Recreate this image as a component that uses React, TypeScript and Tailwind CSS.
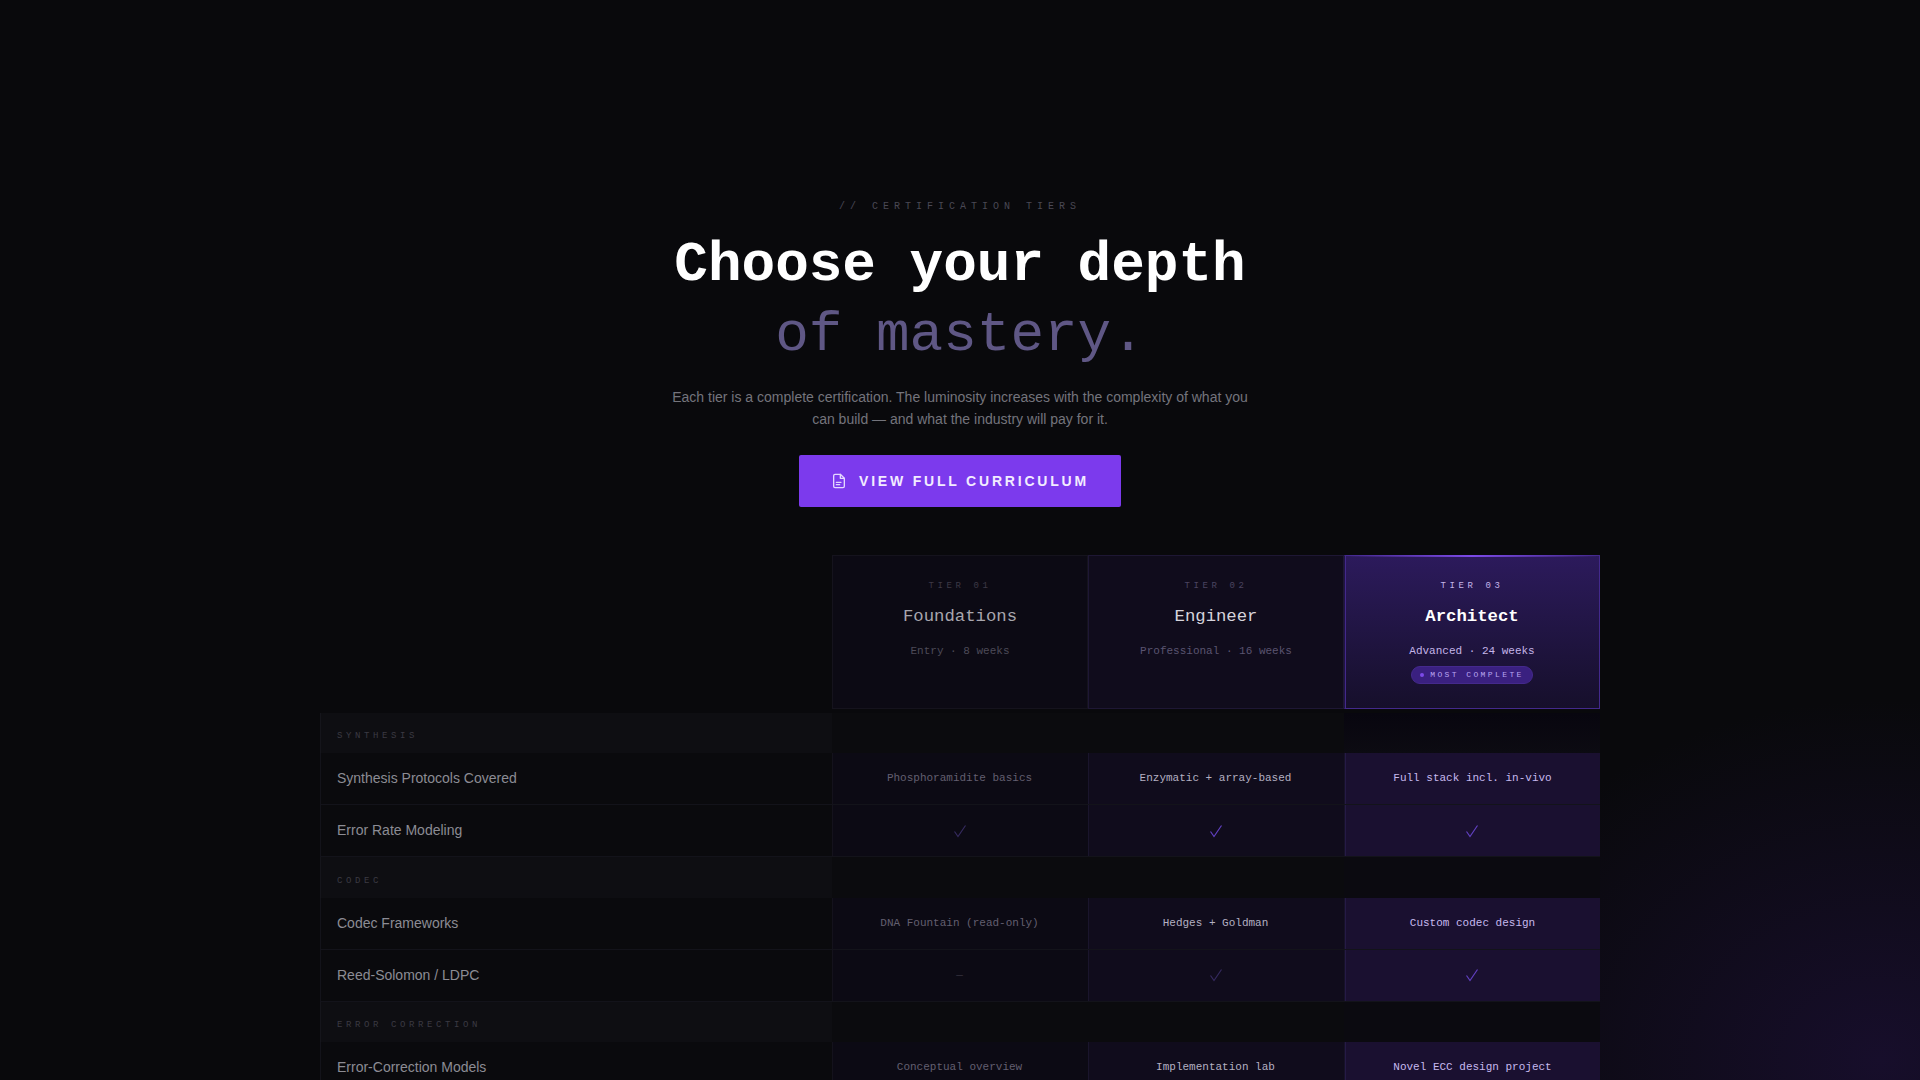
type Cell = { text?: string; mark?: 'on' | 'dim' | 'none' }
type Row = { label: string; cells: [Cell, Cell, Cell] }
type Section = { title: string; rows: Row[] }

const mono = "font-['Liberation_Mono',monospace]"
const sans = "font-['Liberation_Sans',Arial,sans-serif]"

const tiers = [
  {
    tier: 'TIER 01',
    name: 'Foundations',
    sub: 'Entry · 8 weeks',
    box: 'border-[#15131d] bg-[#0c0a14]',
    tierColor: 'text-[#3d3946]',
    nameColor: 'text-[#a8a6ae] font-normal',
    subColor: 'text-[#4d4a58]',
  },
  {
    tier: 'TIER 02',
    name: 'Engineer',
    sub: 'Professional · 16 weeks',
    box: 'border-[#1e1734] bg-[#100c1c]',
    tierColor: 'text-[#4b4460]',
    nameColor: 'text-[#d6d4dc] font-normal',
    subColor: 'text-[#5a5470]',
  },
  {
    tier: 'TIER 03',
    name: 'Architect',
    sub: 'Advanced · 24 weeks',
    box: 'border-[#43298c] border-l-[#201542] shadow-[inset_1px_0_0_#43298c] bg-gradient-to-b from-[#2c1a5c] to-[#160f2b]',
    tierColor: 'text-[#c4b5e8]',
    nameColor: 'text-white font-bold',
    subColor: 'text-[#c4b5e8]',
  },
]

const sections: Section[] = [
  {
    title: 'SYNTHESIS',
    rows: [
      {
        label: 'Synthesis Protocols Covered',
        cells: [{ text: 'Phosphoramidite basics' }, { text: 'Enzymatic + array-based' }, { text: 'Full stack incl. in-vivo' }],
      },
      {
        label: 'Error Rate Modeling',
        cells: [{ mark: 'dim' }, { mark: 'on' }, { mark: 'on' }],
      },
    ],
  },
  {
    title: 'CODEC',
    rows: [
      {
        label: 'Codec Frameworks',
        cells: [{ text: 'DNA Fountain (read-only)' }, { text: 'Hedges + Goldman' }, { text: 'Custom codec design' }],
      },
      {
        label: 'Reed-Solomon / LDPC',
        cells: [{ mark: 'none' }, { mark: 'dim' }, { mark: 'on' }],
      },
    ],
  },
  {
    title: 'ERROR CORRECTION',
    rows: [
      {
        label: 'Error-Correction Models',
        cells: [{ text: 'Conceptual overview' }, { text: 'Implementation lab' }, { text: 'Novel ECC design project' }],
      },
    ],
  },
]

const cellBox = [
  'bg-[#0c0a14] border-l border-[#14121c] pr-[2px]',
  'bg-[#100c1c] border-l border-[#1a152c] pr-[2px]',
  'bg-[#1a1030] border-l border-[#171228] shadow-[inset_1px_0_0_#251a46]',
]
const cellText = ['text-[#635f70]', 'text-[#b4b0c2]', 'text-[#c6b9ee]']

function Mark({ cell, last }: { cell: Cell; last: boolean }) {
  if (cell.mark === 'none') return <span className={`${mono} text-[11px] text-[#35323f]`}>—</span>
  const color = cell.mark === 'on' ? 'text-[#6140c0]' : 'text-[#352a5e]'
  return (
    <svg width="14" height="14" viewBox="0 0 14 14" fill="none" stroke="currentColor" strokeWidth="1.2" className={`${color} ${last ? 'mr-[2px]' : ''}`}>
      <path d="M1.5 7.5 5 12.5 12.5 1.5" />
    </svg>
  )
}

function DocIcon() {
  return (
    <svg width="16" height="16" viewBox="0 0 24 24" fill="none" stroke="currentColor" strokeWidth="2" strokeLinecap="round" strokeLinejoin="round" className="text-[#e4d8ff]">
      <path d="M14 2H6a2 2 0 0 0-2 2v16a2 2 0 0 0 2 2h12a2 2 0 0 0 2-2V8z" />
      <path d="M14 2v6h6" />
      <path d="M8 14h7M8 17.5h5" />
    </svg>
  )
}

function TierCard({ t }: { t: (typeof tiers)[number] }) {
  const top = t.tier === 'TIER 03'
  return (
    <div className={`relative flex h-[154px] flex-col items-center border pt-[24px] ${t.box}`}>
      {top && <div className="absolute inset-x-0 -top-px h-[2px] bg-gradient-to-r from-transparent via-[#7c4ae8] to-transparent" />}
      <div className={`${mono} text-[9px] leading-[13px] tracking-[0.4em] ${t.tierColor}`}>{t.tier}</div>
      <div className={`${mono} mt-[12px] text-[17.3px] leading-6 ${t.nameColor}`}>{t.name}</div>
      <div className={`${mono} mt-[14px] text-[11px] leading-4 ${t.subColor}`}>{t.sub}</div>
      {top && (
        <div className="mt-[7px] flex h-[18px] items-center gap-[6px] rounded-full border border-[#44298c] bg-[#3a2080] px-2">
          <span className="h-1 w-1 rounded-full bg-[#7c4ae8]" />
          <span className={`${mono} text-[8px] tracking-[0.3em] text-[#b9a4f0]`}>MOST COMPLETE</span>
        </div>
      )}
    </div>
  )
}

export default function App() {
  return (
    <div className="h-screen overflow-hidden bg-[#09090c] bg-[radial-gradient(ellipse_440px_360px_at_1880px_1060px,#170e2b,transparent)]">
      <div className="flex flex-col items-center pt-[199px]">
        <div className={`${mono} text-[10px] leading-[15px] tracking-[0.5em] text-[#4a4854]`}>// CERTIFICATION TIERS</div>
        <h1 className={`${mono} mt-[16px] text-center text-[56px] leading-[70px]`}>
          <span className="block font-bold text-white">Choose your depth</span>
          <span className="block font-normal text-[#5f5785]">of mastery.</span>
        </h1>
        <p className={`${sans} mt-[16px] w-[600px] text-center text-[14px] leading-[22px] text-[#74747c]`}>
          Each tier is a complete certification. The luminosity increases with the complexity of what you
          <br />
          can build — and what the industry will pay for it.
        </p>
        <button className={`${sans} mt-[25px] flex h-[52px] w-[322px] items-center justify-center gap-3 rounded-[2px] bg-[#7c3aed] text-[14px] font-bold tracking-[0.2em] text-[#f2ecff]`}>
          <DocIcon />
          VIEW FULL CURRICULUM
        </button>
      </div>

      <div className="mx-auto mt-12 w-[1280px]">
        <div className="mb-[3.5px] grid grid-cols-[2fr_1fr_1fr_1fr]">
          <div />
          {tiers.map((t) => (
            <TierCard key={t.tier} t={t} />
          ))}
        </div>

        {sections.map((s, si) => (
          <div key={s.title}>
            <div className="grid h-[40.5px] grid-cols-[2fr_1fr_1fr_1fr]">
              <div className={`${mono} flex items-center border-l border-[#15151b] bg-[#0e0e12] pl-4 pt-[8px] text-[9px] tracking-[0.4em] text-[#3b3a43]`}>
                {s.title}
              </div>
              <div className="bg-[#0b0b0e]" />
              <div className="bg-[#0b0b0e]" />
              <div className={si === 0 ? 'bg-gradient-to-b from-[#08060f] to-[#0c0b12]' : 'bg-[#0b0a10]'} />
            </div>
            {s.rows.map((r) => (
              <div key={r.label} className="grid h-[52px] grid-cols-[2fr_1fr_1fr_1fr] border-b border-[#13131a]">
                <div className={`${sans} flex items-center border-l border-[#13131a] bg-[#0a0a0d] pl-4 text-[14px] text-[#8c8c94]`}>
                  {r.label}
                </div>
                {r.cells.map((c, i) => (
                  <div key={i} className={`flex items-center justify-center ${cellBox[i]}`}>
                    {c.text ? <span className={`${mono} text-[11px] ${cellText[i]}`}>{c.text}</span> : <Mark cell={c} last={i === 2} />}
                  </div>
                ))}
              </div>
            ))}
          </div>
        ))}
      </div>
    </div>
  )
}
